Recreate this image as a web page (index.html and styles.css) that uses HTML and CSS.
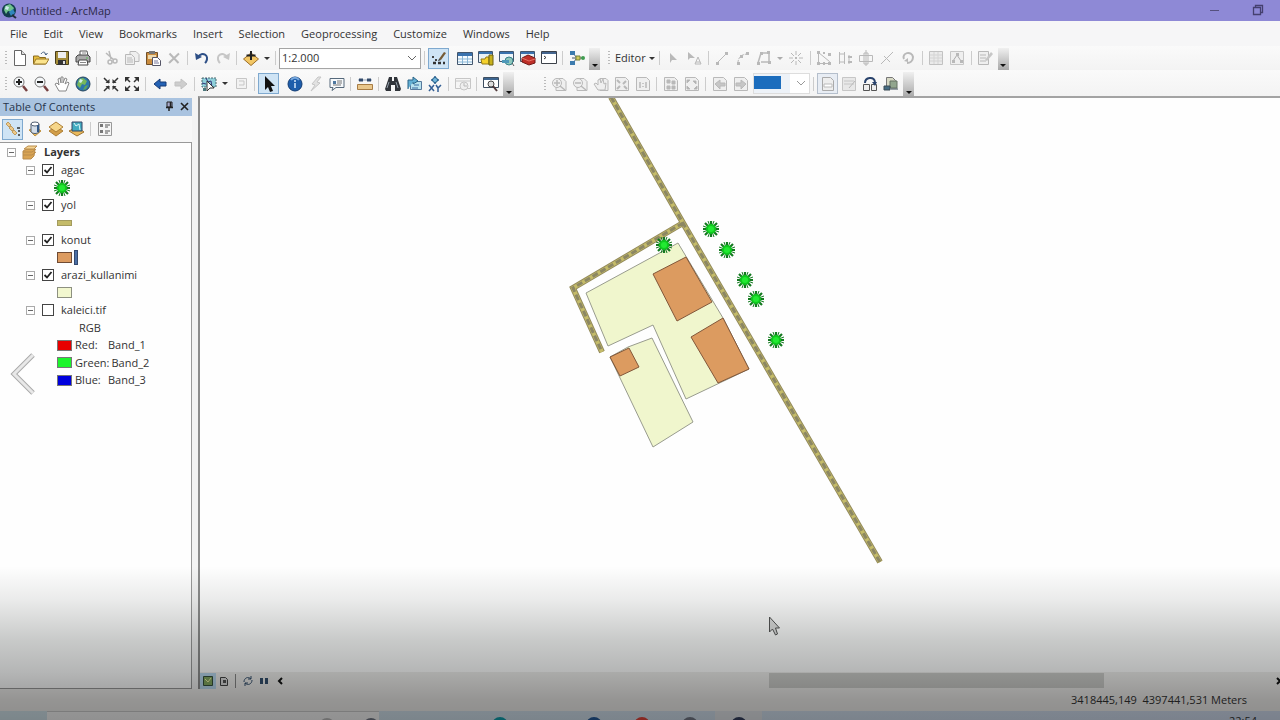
FILE: index.html
```html
<!DOCTYPE html>
<html lang="en">
<head>
<meta charset="utf-8">
<title>Untitled - ArcMap</title>
<link rel="stylesheet" href="styles.css">
</head>
<body>
<div class="app">
<header class="titlebar">
  <svg class="logo" viewBox="0 0 16 16"><circle cx="8" cy="7.500" r="7" fill="#123c4d"/><path d="M4 3 9 1l4 4-2 4-4-1-2 3-2-4z" fill="#6fc18d"/><path d="M5 3l3 1-1 3-3-1z" fill="#cfe9ef"/><path d="M8 9l4-3 2 4-4 3z" fill="#3186bd"/><path d="M11 12l4 3" stroke="#222d3a" stroke-width="2"/></svg>
  <h1 class="title">Untitled - ArcMap</h1>
  <div class="winbtns">
    <button class="winbtn" aria-label="Minimize"><svg class="ic" viewBox="0 0 16 16"><path d="M4 7.500h9" stroke="#55507f"/></svg></button>
    <button class="winbtn" aria-label="Restore"><svg class="ic" viewBox="0 0 16 16" fill="none" stroke="#45406f" stroke-width="1.300"><path d="M3.500 4.500h7v7h-7z"/><path d="M5.500 4.500v-2h7v7h-2"/></svg></button>
  </div>
</header>
<nav class="menubar">
  <button class="menu">File</button><button class="menu">Edit</button><button class="menu">View</button><button class="menu">Bookmarks</button><button class="menu">Insert</button><button class="menu">Selection</button><button class="menu">Geoprocessing</button><button class="menu">Customize</button><button class="menu">Windows</button><button class="menu">Help</button>
</nav>
<div class="toolbar">
  <span class="grip"></span>
  <button class="tool" aria-label="New"><svg class="ic" viewBox="0 0 16 16"><path d="M2.500.5h7l4 4v11h-11z" fill="#fff" stroke="#666"/><path d="M9.500.5v4h4" fill="#ddd" stroke="#666"/></svg></button>
  <button class="tool" aria-label="Open"><svg class="ic" viewBox="0 0 16 16"><path d="M.5 14V6h5l1 1.500h6V14z" fill="#e6bd3d" stroke="#8a6a1c"/><path d="M.5 14 3 9h13l-3 5z" fill="#fbe38b" stroke="#9b7a28"/><path d="M8 4c2-3 4-2 5 0M11.500 3.500 13 5l1.500-2" fill="none" stroke="#466083"/></svg></button>
  <button class="tool" aria-label="Save"><svg class="ic" viewBox="0 0 16 16"><path d="M1.500 1.500h13v13h-12l-1-1z" fill="#a58d39" stroke="#493e19"/><path d="M4 2h8v6H4z" fill="#eee"/><path d="M4 10h8v5H4z" fill="#333"/><path d="M9 11h2v3H9z" fill="#ddd"/></svg></button>
  <button class="tool" aria-label="Print"><svg class="ic" viewBox="0 0 16 16"><path d="M5 6V1h7l1 5" fill="#fff" stroke="#555"/><path d="M1 7l2-2h10l2 2v5H1z" fill="#aaa" stroke="#444"/><path d="M4 10h8l1 5H3z" fill="#fff" stroke="#444"/><path d="M11 8h2" stroke="#5b5"/><path d="M7 3h4M5 12.500h6" stroke="#888"/></svg></button>
  <span class="sep"></span>
  <button class="tool off" aria-label="Cut"><svg class="ic" viewBox="0 0 16 16" fill="none" stroke="#aaa" stroke-width="1.500"><path d="M6 1l2 8M3 3l8 7"/><circle cx="7" cy="12" r="2"/><circle cx="12" cy="11" r="2"/></svg></button>
  <button class="tool off" aria-label="Copy"><svg class="ic" viewBox="0 0 16 16" fill="#eee" stroke="#aaa"><path d="M6 1.500h6l3 3v7H6z"/><path d="M1.500 4.500h6l3 3v7h-9z"/><path d="M3 8h5M3 10h6M3 12h6"/></svg></button>
  <button class="tool" aria-label="Paste"><svg class="ic" viewBox="0 0 16 16"><path d="M1.500 2.500h11v12h-11z" fill="#c98b3e" stroke="#70502a"/><path d="M4 1h6v3H4z" fill="#777"/><path d="M3 5h8v4H3z" fill="#eed9ac"/><path d="M7.500 7.500h5l3 3v5h-8z" fill="#fff" stroke="#556"/><path d="M9 11h4M9 13h5" stroke="#779"/></svg></button>
  <button class="tool off" aria-label="Delete"><svg class="ic" viewBox="0 0 16 16"><path d="M3.500 3.500l9 9.500M13 3.500 3 13" stroke="#aaa" stroke-width="2"/></svg></button>
  <span class="sep"></span>
  <button class="tool" aria-label="Undo"><svg class="ic" viewBox="0 0 16 16"><path d="M4 7c4-6 12-2 8 5l-1 1" fill="none" stroke="#2d4f86" stroke-width="2"/><path d="M1 3l1 7 6-3z" fill="#2d4f86"/></svg></button>
  <button class="tool off" aria-label="Redo"><svg class="ic" viewBox="0 0 16 16"><path d="M12 7C8 1 0 5 4 12l1 1" fill="none" stroke="#bbb" stroke-width="2"/><path d="M15 3l-1 7-6-3z" fill="#bbb"/></svg></button>
  <span class="sep"></span>
  <button class="tool" aria-label="Add Data"><svg class="ic" viewBox="0 0 16 16"><path d="M8 3l7.500 6L8 15.500.5 9z" fill="#f3c765" stroke="#9b6d28"/><path d="M8 1v9M3.500 5.500h9" stroke="#222" stroke-width="2"/></svg></button>
  <button class="drop" aria-label="Add Data options"></button>
  <span class="sep"></span>
  <select class="scale" aria-label="Map scale"><option>1:2.000</option></select>
  <span class="sep"></span>
  <button class="tool pressed" aria-label="Editor Toolbar"><svg class="ic" viewBox="0 0 16 16"><path d="M2 13h12" stroke="#333" stroke-dasharray="3 2" stroke-width="2.500"/><path d="M1 6h2v2H1zM4 9h2v2H4z" fill="#444"/><path d="M8 9l5-7 2 1-5 7z" fill="#765b35"/><path d="M7 11l1-2 2 1z" fill="#222"/></svg></button>
  <button class="tool" aria-label="Table Of Contents"><svg class="ic" viewBox="0 0 16 16"><path d="M.5 2.500h15v12H.5z" fill="#f5fbff" stroke="#43566d"/><path d="M1 3h14v3H1z" fill="#3a72ae"/><path d="M1 9h14M1 12h14M5.500 6v8M10.500 6v8" stroke="#89b5d5"/></svg></button>
  <button class="tool" aria-label="Catalog"><svg class="ic" viewBox="0 0 16 16"><path d="M.5 1.500h14v11H.5z" fill="#e9f1f5" stroke="#43566d"/><path d="M1 2h13v2H1z" fill="#3a72ae"/><path d="M3 9h4l1-2h3v7H4z" fill="#f5d12b" stroke="#927a19"/><path d="M11 5h4v10h-4z" fill="#c7b11c" stroke="#6b5f13"/></svg></button>
  <button class="tool" aria-label="Search"><svg class="ic" viewBox="0 0 16 16"><path d="M.5 1.500h14v10H.5z" fill="#eef5fa" stroke="#43566d"/><path d="M1 2h13v2H1z" fill="#3a72ae"/><circle cx="10" cy="11" r="4" fill="#8fc7bb" stroke="#36808a"/><path d="M3 10h7v3H3z" fill="#4d98b9"/><path d="M13 13l2 3" stroke="#555"/></svg></button>
  <button class="tool" aria-label="ArcToolbox"><svg class="ic" viewBox="0 0 16 16"><path d="M.5 1.500h14v10H.5z" fill="#e9f1f5" stroke="#43566d"/><path d="M1 2h13v2H1z" fill="#3a72ae"/><path d="M2 8l6-3 7 3v5l-6 2-7-3z" fill="#bf2f28" stroke="#6f1916"/><path d="M2 8l7 3 6-2" fill="none" stroke="#e67266"/></svg></button>
  <button class="tool" aria-label="Python"><svg class="ic" viewBox="0 0 16 16"><path d="M.5 1.500h15v12H.5z" fill="#fff" stroke="#3c4149"/><path d="M1 2h14v2H1z" fill="#45668f"/><path d="M3 6l2 1.500L3 9" fill="none" stroke="#333"/></svg></button>
  <span class="sep"></span>
  <button class="tool" aria-label="ModelBuilder"><svg class="ic" viewBox="0 0 16 16"><path d="M4 3l4 5H3M4 13l4-5h5" fill="none" stroke="#456"/><path d="M1 1h5v4H1zM1 11h5v4H1z" fill="#3c7bad"/><path d="M7 6h4v4H7z" fill="#d3cc5a" stroke="#71803a"/><circle cx="14" cy="8" r="2" fill="#409d50"/></svg></button>
  <button class="more" aria-label="Toolbar options"></button>
  <span class="grip third"></span>
  <button class="editor">Editor<span class="caret"></span></button>
  <span class="sep"></span>
  <button class="tool off" aria-label="Edit Tool"><svg class="ic" viewBox="0 0 16 16"><path d="M5 3v10l2-3h5z" fill="#aaa"/></svg></button>
  <button class="tool off" aria-label="Edit Annotation"><svg class="ic" viewBox="0 0 16 16"><path d="M2 2v8l2-2h5z" fill="#aaa"/><path d="M9 14l3-7 3 7zM10 12h4" fill="none" stroke="#aaa"/></svg></button>
  <span class="sep"></span>
  <button class="tool off" aria-label="Straight Segment"><svg class="ic" viewBox="0 0 16 16"><path d="M3 13 13 3" stroke="#aaa"/><path d="M2 12h3v3H2zM11 2h3v3h-3z" fill="#aaa"/></svg></button>
  <button class="tool off" aria-label="Arc Segment"><svg class="ic" viewBox="0 0 16 16"><path d="M3 13c0-6 4-9 10-9" fill="none" stroke="#aaa" stroke-dasharray="3 1"/><path d="M2 12h3v3H2zM5 5h3v3H5zM11 2h3v3h-3z" fill="#aaa"/></svg></button>
  <button class="tool off" aria-label="Trace"><svg class="ic" viewBox="0 0 16 16"><path d="M2 13 5 3h8v9H5" fill="none" stroke="#aaa" stroke-width="1.500"/><path d="M1 12h3v3H1zM4 2h3v3H4zM11 1h3v3h-3zM12 11h3v3h-3z" fill="#aaa"/></svg></button>
  <button class="drop off" aria-label="Construction options"></button>
  <button class="tool off" aria-label="Point"><svg class="ic" viewBox="0 0 16 16"><path d="M8 1v4M8 11v4M1 8h4M11 8h4M3 3l3 3M10 10l3 3M13 3l-3 3M6 10l-3 3" stroke="#aaa"/><path d="M7 7h2v2H7z" fill="#aaa"/></svg></button>
  <span class="sep"></span>
  <button class="tool off" aria-label="Edit Vertices"><svg class="ic" viewBox="0 0 16 16"><path d="M2.500 2.500v11h11v-2z" fill="none" stroke="#aaa"/><path d="M1 1h3v3H1zM1 12h3v3H1zM12 12h3v3h-3zM12 3h3v3h-3zM7 2h2v2H7zM7 12h2v3H7z" fill="#aaa"/></svg></button>
  <button class="tool off" aria-label="Reshape"><svg class="ic" viewBox="0 0 16 16"><path d="M2.500 2v12M7.500 2v12M2 4h6M2 12h6M12 5v9" stroke="#aaa"/><path d="M11 7h4M11 12h4" stroke="#aaa" stroke-width="2"/></svg></button>
  <button class="tool off" aria-label="Cut Polygons"><svg class="ic" viewBox="0 0 16 16"><path d="M1.500 5.500h13v6h-13zM6 3h4v11H6zM8 0v16" fill="none" stroke="#aaa"/></svg></button>
  <button class="tool off" aria-label="Split"><svg class="ic" viewBox="0 0 16 16"><path d="M2 14 14 2M5 6l6 6" stroke="#aaa"/></svg></button>
  <button class="tool off" aria-label="Rotate"><svg class="ic" viewBox="0 0 16 16"><path d="M4 9C1 3 12 0 13 7c0 4-3 6-6 6" fill="none" stroke="#aaa" stroke-width="2"/><path d="M8 8v4l-4-1z" fill="#aaa"/></svg></button>
  <span class="sep"></span>
  <button class="tool off" aria-label="Attributes"><svg class="ic" viewBox="0 0 16 16"><path d="M1.500 1.500h13v13h-13z" fill="#e8e8e8" stroke="#b5b5b5"/><path d="M2 5h12M2 8h12M2 11h12M6 2v12M10 2v12" stroke="#ccc"/></svg></button>
  <button class="tool off" aria-label="Sketch Properties"><svg class="ic" viewBox="0 0 16 16"><path d="M1.500 1.500h13v13h-13z" fill="#eee" stroke="#bbb"/><path d="M4 11l4-6 4 6" fill="none" stroke="#999"/><path d="M3 10h3v3H3zM7 3h3v3H7zM11 10h3v3h-3z" fill="#aaa"/></svg></button>
  <span class="sep"></span>
  <button class="tool off" aria-label="Create Features"><svg class="ic" viewBox="0 0 16 16"><path d="M1.500 1.500h10v13h-10zM3 5h6M3 8h6M3 11h6" fill="#eee" stroke="#aaa"/><path d="M8 10l6-8 2 2-6 7z" fill="#bbb"/></svg></button>
  <button class="more" aria-label="Editor options"></button>
</div>
<div class="toolbar">
  <span class="grip"></span>
  <button class="tool" aria-label="Zoom In"><svg class="ic" viewBox="0 0 16 16"><circle cx="7" cy="6" r="5" fill="#f5f8fa" stroke="#777"/><path d="M4 6h6M7 3v6" stroke="#222" stroke-width="2"/><path d="M11 10l4 5" stroke="#764040" stroke-width="2.500"/></svg></button>
  <button class="tool" aria-label="Zoom Out"><svg class="ic" viewBox="0 0 16 16"><circle cx="7" cy="6" r="5" fill="#f5f8fa" stroke="#777"/><path d="M4 6h6" stroke="#222" stroke-width="2"/><path d="M11 10l4 5" stroke="#764040" stroke-width="2.500"/></svg></button>
  <button class="tool" aria-label="Pan"><svg class="ic" viewBox="0 0 16 16"><path d="M5 15 1 8l2-1 2 2-1-6 2-1 1 5V1h2v6l2-5 2 1-2 5 3-2 1 1-3 8z" fill="#fff" stroke="#888"/></svg></button>
  <button class="tool" aria-label="Full Extent"><svg class="ic" viewBox="0 0 16 16"><circle cx="8" cy="8" r="7" fill="#2d77ac" stroke="#28455a"/><path d="M4 3l4-1 4 3-2 4-3-1-2 4-3-3z" fill="#77b85b"/><path d="M5 3l3 1-2 3-2-1z" fill="#d5eff0"/><path d="M10 10l3-1-2 4-3 1z" fill="#60a55a"/></svg></button>
  <span class="sep"></span>
  <button class="tool" aria-label="Fixed Zoom In"><svg class="ic" viewBox="0 0 16 16"><path d="M1 2l5 5M15 2l-5 5M1 15l5-5M15 15l-5-5" stroke="#333" stroke-width="1.500"/><path d="M6.500 3v4h-4zM9.500 3v4h4zM6.500 14v-4h-4zM9.500 14v-4h4z" fill="#333"/></svg></button>
  <button class="tool" aria-label="Fixed Zoom Out"><svg class="ic" viewBox="0 0 16 16"><path d="M1 1h5L1 6zM15 1h-5l5 5zM1 15h5l-5-5zM15 15h-5l5-5z" fill="#333"/><path d="M2 2l4 4M14 2l-4 4M2 14l4-4M14 14l-4-4" stroke="#333" stroke-width="1.500"/></svg></button>
  <span class="sep"></span>
  <button class="tool" aria-label="Back"><svg class="ic" viewBox="0 0 16 16"><path d="M2 8l6-5v3h6v4H8v3z" fill="#2462b5" stroke="#173b75"/></svg></button>
  <button class="tool off" aria-label="Forward"><svg class="ic" viewBox="0 0 16 16"><path d="M14 8 8 3v3H2v4h6v3z" fill="#c4c4c4" stroke="#b5b5b5"/></svg></button>
  <span class="sep"></span>
  <button class="tool" aria-label="Select Features"><svg class="ic" viewBox="0 0 16 16"><path d="M1 2h14v9H1z" fill="#8ecfda" stroke="#4c696e" stroke-dasharray="2 1"/><path d="M5 2l2 4 3-1 1 6M1 7l4 1" fill="none" stroke="#337"/><path d="M6 5v10l3-3h4z" fill="#fff" stroke="#333"/><path d="M2 12h3v3H2z" fill="#4c787d"/></svg></button>
  <button class="drop" aria-label="Selection options"></button>
  <button class="tool off" aria-label="Clear Selection"><svg class="ic" viewBox="0 0 16 16"><path d="M3.500 2.500h10v10h-10zM6 5h5v4H6" fill="#f2f2f2" stroke="#bbb"/></svg></button>
  <span class="sep"></span>
  <button class="tool pressed" aria-label="Select Elements"><svg class="ic" viewBox="0 0 16 16"><path d="M4 0v14l3-3 2 5 3-1-2-5h4z" fill="#111"/></svg></button>
  <button class="tool" aria-label="Identify"><svg class="ic" viewBox="0 0 16 16"><circle cx="8" cy="8" r="7" fill="#1d5dab" stroke="#123c73"/><path d="M4 4c2-3 6-3 8 0" stroke="#77a9df" fill="none" stroke-width="2"/><path d="M8 4v2M8 7v5" stroke="#d5e6fa" stroke-width="1.500"/></svg></button>
  <button class="tool off" aria-label="Hyperlink"><svg class="ic" viewBox="0 0 16 16"><path d="M10 1 4 8l3 1-4 6 9-8-3-1 4-5z" fill="#ddd" stroke="#bbb"/></svg></button>
  <button class="tool" aria-label="HTML Popup"><svg class="ic" viewBox="0 0 16 16"><path d="M1 2.500h14v9H7l-4 3 1-3H1z" fill="#f6f9fc" stroke="#56697b"/><path d="M4 5h3v3H4z" fill="#4c769f"/><path d="M8 5h5M8 7h5M4 9h8" stroke="#777"/></svg></button>
  <span class="sep"></span>
  <button class="tool" aria-label="Measure"><svg class="ic" viewBox="0 0 16 16"><path d="M.5 8.500h15v5H.5z" fill="#e9c78c" stroke="#a87c43"/><path d="M1 4h14" stroke="#8fa0b5"/><path d="M2 4h4M10 4h4" stroke="#334a6b" stroke-width="3"/></svg></button>
  <span class="sep"></span>
  <button class="tool" aria-label="Find"><svg class="ic" viewBox="0 0 16 16"><path d="M4 1h3v4h2V1h3l4 12-1 2h-5V9H6v6H1l-1-2z" fill="#30343a"/><path d="M4 6l-2 6M11 6l2 6" stroke="#909ba6"/></svg></button>
  <button class="tool" aria-label="Find Route"><svg class="ic" viewBox="0 0 16 16"><path d="M4.500 5.500h11v8h-11z" fill="#b9e2ef" stroke="#57799c"/><path d="M2 13V4h5V1l5 4-5 3V6" fill="#62afd4" stroke="#286386"/><path d="M8 9h5M6 12h6" stroke="#386aa0"/></svg></button>
  <button class="tool" aria-label="Go To XY"><svg class="ic" viewBox="0 0 16 16"><path d="M8 0v8M4 4h8" stroke="#235c94" stroke-width="1.500"/><circle cx="8" cy="4" r="2.500" fill="#74b8dd" stroke="#245b84"/><path d="M2 9l5 6M7 9l-5 6M9 9l2 3 3-3M11 12v4" fill="none" stroke="#345f95" stroke-width="1.500"/></svg></button>
  <span class="sep"></span>
  <button class="tool off" aria-label="Time Slider"><svg class="ic" viewBox="0 0 16 16"><path d="M.5 2.500h15v10H.5zM1 5h14" fill="#f5f5f5" stroke="#bbb"/><circle cx="9" cy="10" r="4" fill="#eee" stroke="#bbb"/><path d="M9 7v3h3" fill="none" stroke="#aaa"/></svg></button>
  <span class="sep"></span>
  <button class="tool" aria-label="Create Viewer"><svg class="ic" viewBox="0 0 16 16"><path d="M.5 1.500h15v10H.5z" fill="#fff" stroke="#3e4e60"/><path d="M1 2h14v2H1z" fill="#3d6590"/><circle cx="8" cy="8" r="3" fill="#ddd" stroke="#444"/><path d="M10 10l4 5" stroke="#503939" stroke-width="2"/></svg></button>
  <button class="more" aria-label="Tools options"></button>
  <span class="grip second"></span>
  <button class="tool off" aria-label="Layout Zoom In"><svg class="ic" viewBox="0 0 16 16" fill="#eee" stroke="#aaa"><path d="M5 2.500h7l3 3v9H5z"/><circle cx="6" cy="7" r="4.500"/><path d="M3 7h6M6 4v6M9 10l5 4" stroke-width="1.500"/></svg></button>
  <button class="tool off" aria-label="Layout Zoom Out"><svg class="ic" viewBox="0 0 16 16" fill="#eee" stroke="#aaa"><path d="M5 2.500h7l3 3v9H5z"/><circle cx="6" cy="7" r="4.500"/><path d="M3 7h6M9 10l5 4" stroke-width="1.500"/></svg></button>
  <button class="tool off" aria-label="Layout Pan"><svg class="ic" viewBox="0 0 16 16" fill="#eee" stroke="#aaa"><path d="M7 2.500h6l2 2v10H7z"/><path d="M5 14 1 8l2-1 2 2V4l2-1 1 4 2-4 1 5 2-1-1 7z"/></svg></button>
  <button class="tool off" aria-label="Whole Page"><svg class="ic" viewBox="0 0 16 16" fill="#eee" stroke="#aaa"><path d="M1.500 1.500h10l3 3v10h-13z"/><path d="M3 4l3 3M12 5 9 8M3 13l3-3M13 13l-3-3" stroke-width="2"/></svg></button>
  <button class="tool off" aria-label="Zoom to 100%"><svg class="ic" viewBox="0 0 16 16" fill="#eee" stroke="#aaa"><path d="M1.500 1.500h10l3 3v10h-13z"/><path d="M5 6v6M11 6v6M8 7v1M8 10v1" stroke-width="1.500"/></svg></button>
  <span class="sep"></span>
  <button class="tool off" aria-label="Layout Fixed Zoom In"><svg class="ic" viewBox="0 0 16 16" fill="#eee" stroke="#aaa"><path d="M1.500 1.500h10l3 3v10h-13z"/><path d="M4 4h3v3H4zM9 5h3v3H9zM4 10h3v3H4zM9 10h3v3H9z" fill="#aaa"/></svg></button>
  <button class="tool off" aria-label="Layout Fixed Zoom Out"><svg class="ic" viewBox="0 0 16 16" fill="#eee" stroke="#aaa"><path d="M1.500 1.500h10l3 3v10h-13z"/><path d="M3 4h3L3 7zM12 5v3l-3-3zM3 13v-3l3 3zM13 13h-3l3-3z" fill="#999"/></svg></button>
  <span class="sep"></span>
  <button class="tool off" aria-label="Layout Back"><svg class="ic" viewBox="0 0 16 16" fill="#eee" stroke="#aaa"><path d="M1.500 1.500h10l3 3v10h-13z"/><path d="M3 8l5-4v3h5v3H8v3z" fill="#bbb"/></svg></button>
  <button class="tool off" aria-label="Layout Forward"><svg class="ic" viewBox="0 0 16 16" fill="#eee" stroke="#aaa"><path d="M1.500 1.500h10l3 3v10h-13z"/><path d="M13 8 8 4v3H3v3h5v3z" fill="#bbb"/></svg></button>
  <select class="percent" aria-label="Layout zoom"><option></option></select>
  <span class="sep"></span>
  <button class="tool pressed flat" aria-label="Toggle Draft Mode"><svg class="ic" viewBox="0 0 16 16"><path d="M2.500 1.500h8l3 3v10h-11z" fill="#eee" stroke="#aaa"/><path d="M4 8h8v3H4z" fill="#fff" stroke="#bbb"/></svg></button>
  <button class="tool off" aria-label="Focus Data Frame"><svg class="ic" viewBox="0 0 16 16"><path d="M1.500 1.500h13v13h-13zM3 5h10M3 8h10" fill="#e5e5e5" stroke="#bbb"/><path d="M8 12l6-7" stroke="#aaa"/></svg></button>
  <button class="tool" aria-label="Change Layout"><svg class="ic" viewBox="0 0 16 16"><path d="M1.500 8.500h6v6h-6zM9.500 8.500h5v6h-5z" fill="#eee" stroke="#555"/><path d="M3 7c0-6 9-7 10-1" fill="none" stroke="#29436c" stroke-width="2"/><path d="M10 6h5l-2 4z" fill="#29436c"/></svg></button>
  <button class="tool" aria-label="Data Driven Pages"><svg class="ic" viewBox="0 0 16 16"><path d="M3.500 1.500h6l3 3v7h-9z" fill="#d7d9c5" stroke="#777"/><path d="M7 5h7v7H7z" fill="#91a58d" stroke="#657163"/><path d="M1 10h6v4H1zM8 13h7" fill="#456b82" stroke="#3b4b55"/></svg></button>
  <button class="more" aria-label="Layout options"></button>
</div>

<main class="work">
  <aside class="toc">
    <div class="tochead"><h2 class="toctitle">Table Of Contents</h2>
      <button class="headbtn" aria-label="Auto Hide"><svg class="ic small" viewBox="0 0 12 12"><path d="M4 1h5v5H4z" fill="#aac" stroke="#222"/><path d="M7.500 1v5M3 6.500h7M6 7v3" stroke="#222" stroke-width="1.500"/></svg></button>
      <button class="headbtn" aria-label="Close"><svg class="ic small" viewBox="0 0 12 12"><path d="M3 2l7 7M10 2 3 9" stroke="#222" stroke-width="1.600"/></svg></button>
    </div>
    <div class="toctools">
      <button class="tool pressed flush" aria-label="List By Drawing Order"><svg class="ic" viewBox="0 0 16 16"><path d="M1 3l2-2 3 3-2 2zM4 7l2-2 3 3-2 2zM7 11l2-2 3 3-2 2z" fill="#ecc98a" stroke="#bf9c62"/><path d="M12 7h3M13 10h2M13 14h2" stroke="#333" stroke-width="1.500"/></svg></button>
      <button class="tool" aria-label="List By Source"><svg class="ic" viewBox="0 0 16 16"><path d="M2 9l7-3 5 4-6 5z" fill="#eaba5c" stroke="#c19343"/><path d="M4 3v8c2 2 6 2 8 0V3z" fill="#d2dce7" stroke="#4f5d70"/><ellipse cx="8" cy="3" rx="4" ry="2" fill="#fff" stroke="#4f5d70"/><path d="M11 4v7" stroke="#315888" stroke-width="2"/></svg></button>
      <button class="tool" aria-label="List By Visibility"><svg class="ic" viewBox="0 0 16 16" stroke="#ad7f36"><path d="M8 5l7 5-7 5-7-5z" fill="#d39e48"/><path d="M8 1l7 5-7 5-7-5z" fill="#f6d68a"/></svg></button>
      <button class="tool" aria-label="List By Selection"><svg class="ic" viewBox="0 0 16 16"><path d="M0 10l8-4 7 5-7 4z" fill="#eaba5c" stroke="#9e7434"/><path d="M3 1h10v9H3z" fill="#43acc1" stroke="#346"/><path d="M5 2l2 3 3-2 1 6" fill="none" stroke="#d8f6f7"/></svg></button>
      <span class="sep"></span>
      <button class="tool" aria-label="Options"><svg class="ic" viewBox="0 0 16 16"><path d="M1.500 1.500h13v13h-13z" fill="#f5f5f5" stroke="#999"/><path d="M3 3h3v3H3zM3 9h3v3H3z" fill="#777"/><path d="M8 4h5M8 6h3M8 10h5M8 12h3" stroke="#555"/></svg></button>
    </div>
    <div class="tree">
      <div class="row root"><span class="toggle"></span><svg class="ic" viewBox="0 0 16 16" stroke="#b98c4c"><path d="M1 7l4-2h8l-1 7-3 3H1z" fill="#d9a454"/><path d="M2 5l4-3h9l-3 3z" fill="#f5d391"/><path d="M1 8h9l4-3M1 11h9l4-3" fill="none"/></svg><strong>Layers</strong></div>
      <label class="row layer"><span class="toggle"></span><input class="check" type="checkbox" checked>agac</label>
      <div class="row symbol"><svg class="treeic" viewBox="-9 -9 18 18"><use href="#tree"/></svg></div>
      <label class="row layer"><span class="toggle"></span><input class="check" type="checkbox" checked>yol</label>
      <div class="row symbol"><span class="swatch line"></span></div>
      <label class="row layer"><span class="toggle"></span><input class="check" type="checkbox" checked>konut</label>
      <div class="row symbol"><span class="swatch house"></span><span class="caretbar"></span></div>
      <label class="row layer"><span class="toggle"></span><input class="check" type="checkbox" checked>arazi_kullanimi</label>
      <div class="row symbol"><span class="swatch land"></span></div>
      <label class="row layer"><span class="toggle"></span><input class="check" type="checkbox">kaleici.tif</label>
      <div class="row rgb">RGB</div>
      <div class="row symbol"><span class="swatch red"></span><span class="chan">Red:</span>Band_1</div>
      <div class="row symbol"><span class="swatch green"></span><span class="chan">Green:</span>Band_2</div>
      <div class="row symbol"><span class="swatch blue"></span><span class="chan">Blue:</span>Band_3</div>
    </div>
  </aside>
  <section class="mappane">
    <svg class="map" role="img" aria-label="Map">
      <defs>
        <g id="tree"><path d="M0-8V8M-8 0H8M-6-6 6 6M6-6-6 6" stroke="#147a20" stroke-width="2.200"/><path d="M-3-8 3 8M3-8-3 8M-8-3 8 3M8-3-8 3" stroke="#147a20"/><circle r="5" fill="#10c81f"/><circle r="3" fill="#22ea32"/></g>
      </defs>
      <g transform="translate(-200 -98)">
        <g fill="#f0f6cd" stroke="#999c8e">
          <path d="M586 293 678 243 723 318 749 369 686 399 653 325 608 346z"/>
          <path d="M610 357 628 347 652 338 693 422 653 447z"/>
        </g>
        <g fill="#dc9b60" stroke="#82573a">
          <path d="M686 257 712 302 677 321 653 274z"/>
          <path d="M723 318 749 369 718 383 691 337z"/>
          <path d="M610 357 629 348 639 367 620 376z"/>
        </g>
        <g fill="none">
          <path d="M683 223 573 288 602 352M611 97 683 223 880 562" stroke="#948b5c" stroke-width="6"/>
          <path d="M683 223 573 288 602 352M611 97 683 223 880 562" stroke="#c4bb69" stroke-width="4"/>
          <path d="M683 223 573 288 602 352M611 97 683 223 880 562" stroke="#8c8763" stroke-width="3" stroke-dasharray="6 3"/>
        </g>
        <use href="#tree" x="664" y="245"/><use href="#tree" x="711" y="229"/><use href="#tree" x="727" y="250"/><use href="#tree" x="745" y="280"/><use href="#tree" x="756" y="299"/><use href="#tree" x="776" y="340"/>
        <path d="M769.500 617v15l3-3 3 6 2-1-2-6h4z" fill="#ddd" stroke="#555"/>
      </g>
    </svg>
    <div class="viewbar">
      <button class="view on" aria-label="Data View"><svg class="ic small" viewBox="0 0 12 12"><path d="M1.500 1.500h9v9h-9z" fill="#83a85f" stroke="#354f3a"/><path d="M3 4l3 3 3-4" stroke="#eef1a4" fill="none"/></svg></button>
      <button class="view" aria-label="Layout View"><svg class="ic small" viewBox="0 0 12 12"><path d="M2.500 2.500h5l2 2v6h-7z" fill="#ddd" stroke="#444"/><path d="M5 5h3v3H5z" fill="#555"/></svg></button>
      <span class="sep"></span>
      <button class="view" aria-label="Refresh"><svg class="ic small" viewBox="0 0 12 12" fill="none" stroke="#34506e"><path d="M2 7c0-4 4-6 7-3M10 5c0 4-4 6-7 3"/><path d="M9 1v3H6M3 11V8h3"/></svg></button>
      <button class="view" aria-label="Pause Drawing"><svg class="ic small" viewBox="0 0 12 12"><path d="M2 3h3v6H2zM7 3h3v6H7z" fill="#34506e"/></svg></button>
      <button class="view" aria-label="Scroll left"><svg class="ic small" viewBox="0 0 12 12"><path d="M8 3 5 6l3 3" fill="none" stroke="#111" stroke-width="2"/></svg></button>
      <div class="track"><div class="thumb"></div></div>
      <svg class="rightarrow" viewBox="0 0 4 12"><path d="M1 3l3 3-3 3" fill="none" stroke="#111" stroke-width="2"/></svg>
    </div>
  </section>
</main>
<footer class="status"><span>3418445,149&nbsp; 4397441,531 Meters</span></footer>
<div class="taskbar">
  <div class="start"></div>
  <div class="searchbox"><i class="ball faint"></i><i class="ball gray"></i></div>
  <div class="apps"><i class="ball teal"></i><i class="ball navy"></i><i class="ball rouge"></i><i class="ball gray"></i></div>
  <div class="active"><i class="ball dark"></i></div>
  <div class="tray">22:54</div>
</div>
<button class="prev" aria-label="Previous"><svg class="chevron" viewBox="0 0 26 44" fill="none"><path d="M23 3 4 22l19 19" stroke="#aaa" stroke-width="5"/><path d="M23 3 4 22l19 19" stroke="#e8e8e8" stroke-width="3"/></svg></button>
<div class="shade"></div>
</div>
</body>
</html>
```
FILE: styles.css
```css
* { box-sizing: border-box; }
body { margin: 0; font: 11px/16px "Open Sans", "Noto Sans", sans-serif; color: #333; background: #f3f3f3; }
button { font: inherit; color: inherit; background: none; border: 0; padding: 0; margin: 0; }
.app { position: relative; display: flex; flex-direction: column; height: 100vh; overflow: hidden; }
.ic { display: block; width: 16px; height: 16px; flex: none; }
.small { width: 12px; height: 12px; }

.titlebar { display: flex; align-items: center; gap: 4px; height: 21px; flex: none; background: #8e89d6; padding-left: 1px; }
.logo { width: 16px; height: 16px; }
.title { margin: 0; font-size: 11px; font-weight: 400; color: #2c2a48; }
.winbtns { display: flex; gap: 28px; margin-left: auto; padding-right: 14px; }
.winbtn { width: 16px; height: 16px; }

.menubar { display: flex; align-items: center; gap: 16px; height: 25px; flex: none; padding-left: 10px; background: #f6f6f7; }
.menu { white-space: nowrap; }

.toolbar { display: flex; align-items: center; height: 24px; flex: none; background: linear-gradient(#fafafa, #f3f3f3); }
.toolbar + .toolbar { height: 27px; }
.grip { width: 2px; height: 14px; margin: 0 2px 0 5px; flex: none; background: repeating-linear-gradient(#bbb 0 1px, transparent 1px 3px); }
.second { margin-left: 30px; }
.third { margin-left: 8px; }
.tool { display: flex; align-items: center; justify-content: center; width: 21px; height: 21px; flex: none; }
.off { opacity: .8; }
.pressed { background: #cfe4f5; border: 1px solid #7fa9cf; margin-right: 5px; }
.flat { background: #e8edf4; border-color: #b5bfcc; margin-right: 0; }
.flush { margin-right: 1px; }
.sep { width: 1px; height: 14px; margin: 0 3px; flex: none; background: #ccc; }
.drop { width: 11px; height: 20px; flex: none; display: flex; align-items: center; justify-content: center; }
.drop::after, .caret { content: ""; border: 3px solid transparent; border-top-color: #333; border-bottom: 0; }
.drop.off::after { border-top-color: #999; }
.scale, .percent { appearance: none; height: 21px; flex: none; font: inherit; color: #333; border: 1px solid #a5a5a5; border-radius: 0; padding: 0 2px; }
.scale { width: 142px; background: #fff url("data:image/svg+xml,%3Csvg xmlns='http://www.w3.org/2000/svg' width='8' height='5'%3E%3Cpath d='M0 0l4 4 4-4' fill='none' stroke='%23666'/%3E%3C/svg%3E") no-repeat right 4px center; }
.percent { width: 57px; margin-left: 2px; border-color: #ddd; background: url("data:image/svg+xml,%3Csvg xmlns='http://www.w3.org/2000/svg' width='8' height='5'%3E%3Cpath d='M0 0l4 4 4-4' fill='none' stroke='%23999'/%3E%3C/svg%3E") no-repeat right 4px center, linear-gradient(#1c6dbd, #1c6dbd) no-repeat 0 2px / 27px 13px, linear-gradient(90deg, #edf2f8 36px, #fff 36px); }
.more { width: 11px; margin: 2px 0 0 2px; align-self: stretch; flex: none; display: flex; align-items: flex-end; justify-content: center; padding-bottom: 3px; background: linear-gradient(#f0f0f0, #a8a8a8); }
.more::after { content: ""; border: 3px solid transparent; border-top-color: #111; border-bottom: 0; }
.editor { display: flex; align-items: center; gap: 3px; margin: 0 1px 0 3px; }

.work { display: flex; flex: 1; min-height: 0; }
.toc { width: 192px; flex: none; display: flex; flex-direction: column; }
.tochead { display: flex; align-items: center; gap: 3px; height: 18px; flex: none; margin-top: 1px; padding: 0 2px 0 3px; background: #a9c3e0; }
.toctitle { margin: 0 auto 0 0; font-size: 11px; font-weight: 400; color: #27344a; }
.headbtn { width: 12px; height: 12px; }
.toctools { display: flex; align-items: center; height: 26px; flex: none; padding-left: 2px; background: #f7f7f7; }
.tree { flex: 1; min-height: 0; overflow: hidden; background: #fefefe; border: solid #999; border-width: 1px 1px 1px 0; }
.row { display: flex; align-items: center; height: 18px; }
.row:nth-child(odd) { height: 17px; }
.root { padding-left: 7px; gap: 6px; height: 18px !important; }
.layer { padding-left: 26px; gap: 8px; }
.symbol { padding-left: 57px; }
.rgb { padding-left: 79px; }
.toggle { width: 9px; height: 9px; flex: none; border: 1px solid #aaa; background: linear-gradient(#666, #666) no-repeat center / 5px 1px; }
.layer .toggle { margin-right: -1px; }
.check { appearance: none; width: 12px; height: 12px; margin: 0 -1px 0 0; flex: none; border: 1px solid #444; background: #fff; }
.check:checked { background: url("data:image/svg+xml,%3Csvg xmlns='http://www.w3.org/2000/svg' width='10' height='10'%3E%3Cpath d='M1.500 5l2.500 2.500 4.500-5.500' fill='none' stroke='%23222' stroke-width='1.800'/%3E%3C/svg%3E") center no-repeat #fff; }
.treeic { width: 18px; height: 18px; margin-left: -4px; }
.swatch { width: 15px; height: 11px; flex: none; border: 1px solid #777; }
.line { height: 6px; background: #c4bb69; border-color: #a39b5e; }
.house { background: #dc9b60; border-color: #704b33; }
.land { background: #f2f7cf; border-color: #8d9080; }
.red { background: #e80000; }
.green { background: #1cf52c; }
.blue { background: #0000dd; }
.caretbar { width: 4px; height: 15px; margin-left: 2px; background: #4b6fa5; border: 1px solid #34496e; }
.chan { min-width: 31px; margin: 0 2px 0 3px; }

.mappane { flex: 1; min-width: 0; margin-left: 6px; display: flex; flex-direction: column; border: solid #8c8c8c; border-width: 2px 0 0 2px; border-top-color: #a3a3a3; margin-top: -1px; }
.map { display: block; flex: 1; min-height: 0; width: 100%; background: #fefefe; }
.viewbar { display: flex; align-items: center; height: 17px; flex: none; background: #f0efed; }
.view { width: 16px; height: 16px; display: flex; align-items: center; justify-content: center; }
.on { background: #b9d8ee; }
.viewbar .sep { margin: 0 4px 0 3px; background: #888; }
.track { flex: 1; display: flex; height: 15px; padding-left: 481px; }
.thumb { width: 66%; background: #cdcdca; }
.rightarrow { width: 4px; height: 12px; }
.status { display: flex; align-items: center; justify-content: flex-end; height: 22px; flex: none; padding: 0 33px 0 0; background: #f0efed; }

.taskbar { display: flex; height: 9px; flex: none; overflow: hidden; background: linear-gradient(90deg, #d2e4eb, #d0dbee); }
.start { width: 47px; }
.searchbox { width: 332px; background: #f6f6f6; display: flex; justify-content: flex-end; gap: 30px; padding-right: 1px; border-top: 1px solid #ccc; }
.apps { flex: none; width: 336px; display: flex; justify-content: flex-end; padding-right: 18px; gap: 34px; }
.active { width: 47px; display: flex; justify-content: center; background: #e1e4e8; }
.tray { flex: 1; text-align: right; padding: 2px 23px 0 0; white-space: nowrap; }
.ball { width: 16px; height: 16px; margin: 6px -1px 0; border-radius: 50%; flex: none; }
.faint { background: #bbb; }
.gray { background: #727886; }
.teal { background: #0f9fae; margin-right: 45px; }
.navy { background: #235a9b; }
.rouge { background: #e3453c; }
.dark { background: #343f5e; }

.prev { position: absolute; left: 10px; top: 352px; }
.chevron { display: block; width: 26px; height: 44px; }
.shade { position: absolute; left: 0; right: 0; bottom: 0; height: 154px; pointer-events: none; background: linear-gradient(rgba(0,0,0,0), rgba(0,8,4,.08) 22%, rgba(0,8,4,.21) 48%, rgba(0,4,4,.29) 69%, rgba(0,0,0,.38) 87%, rgba(0,0,0,.41)); }
```
